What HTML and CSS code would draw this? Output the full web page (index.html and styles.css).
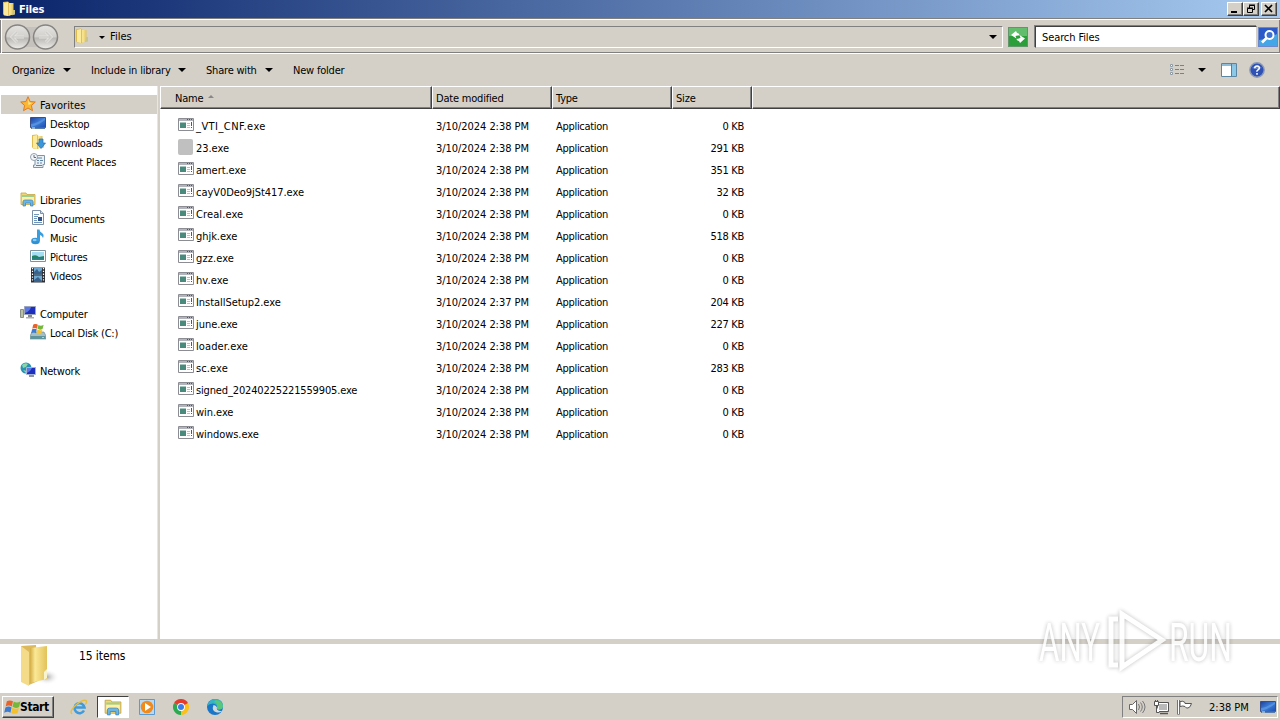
FILE: index.html
```html
<!DOCTYPE html>
<html lang="en">
<head>
<meta charset="utf-8">
<title>Files</title>
<link rel="stylesheet" href="styles.css">
</head>
<body>
<svg class="defs" aria-hidden="true">
  <defs>
    <linearGradient id="gold" x1="0" x2="1"><stop offset="0" stop-color="#d3ad45"/><stop offset=".3" stop-color="#fbe896"/><stop offset="1" stop-color="#e2c25a"/></linearGradient>
    <linearGradient id="blue" x1="0" y1="0" x2="1" y2="1"><stop offset="0" stop-color="#1c3f9e"/><stop offset=".5" stop-color="#3f7fd8"/><stop offset="1" stop-color="#1b4cb0"/></linearGradient>
    <linearGradient id="ball" x1="0" y1="0" x2="0" y2="1"><stop offset="0" stop-color="#e6e4e1"/><stop offset=".48" stop-color="#d3d1ce"/><stop offset=".55" stop-color="#bbb9b6"/><stop offset="1" stop-color="#efedea"/></linearGradient>
  </defs>
  <symbol id="folder" viewBox="0 0 16 16"><path d="M2 1l5-.5 1.500 1.500V15L3 14.500 2 13z" fill="#dcbb50"/><path d="M3 2l4-1v14l-4-1z" fill="#fbea9c"/><path d="M7 2h5.500v11.500L7 15z" fill="url(#gold)"/><path d="M12 9h2v4.500l-3 .8z" fill="#c9c48a"/></symbol>
  <symbol id="exe" viewBox="0 0 16 14"><path d="M.5.500h15v12H.5z" fill="#fff" stroke="#8c8c94"/><path d="M1 1h14v2H1z" fill="#b4b4bc"/><path d="M9 1.500h1m1 0h1m1 0h1" stroke="#555"/><path d="M2 4.500h6v5.500H2z" fill="#4a8a7c"/><path d="M9 5.500h3M9 7.500h3M9 9.500h3" stroke="#a9c8d4"/><path d="M13.500 4v4m0 1v1" stroke="#2f6678"/></symbol>
  <symbol id="lib" viewBox="0 0 16 16"><path d="M1 2h5l1 1.500h8v10H1z" fill="#f1d774" stroke="#c4a548" stroke-width=".8"/><path d="M2 4h12v2H2z" fill="#9fcf8f"/><path d="M2 6h12v5H2z" fill="#fff0a6"/><path d="M3 15V10.500Q3 9 5 9h6q2 0 2 1.500V15h-2.500v-3h-5v3z" fill="#6cb6e4" stroke="#3883ba" stroke-width=".7"/></symbol>
  <symbol id="screen" viewBox="0 0 16 16"><path d="M.5 2.500h15v10H.5z" fill="url(#blue)" stroke="#3a4e88"/><path d="M1 12V9q7-1 14-6v2Q9 10 1 12z" fill="#6ba7e8" opacity=".5"/><path d="M1 12.500h14V14H1z" fill="#5a7caa"/><path d="M2 12.500h3v1H2z" fill="#d8e8e0"/></symbol>
  <symbol id="flag4" viewBox="0 0 18 16"><path d="M3 2Q6 0 9.500 2L8.300 7.500Q5 5.500 1.800 7.500z" fill="#e8622a"/><path d="M10.300 2.300Q13.500 4.500 17.500 2L16 8q-3.500 2-7-.2z" fill="#75b73b"/><path d="M1.500 8.500Q5 6.500 8 8.500L6.800 14Q4 12 .2 14z" fill="#3c7bd2"/><path d="M8.800 8.800q3.500 2 7 .2L14.300 14.500q-3.500 1.500-6.700-.2z" fill="#f4c02c"/></symbol>
</svg>

<header class="titlebar">
  <svg class="i16"><use href="#folder"/></svg>
  <span class="title">Files</span>
  <div class="winbtns">
    <span class="wb"><svg width="12" height="11"><path d="M2 9h6" stroke="#000" stroke-width="2"/></svg></span>
    <span class="wb"><svg width="12" height="11"><path d="M4.500 5V2.500h5v4H8M4 2h6M2.500 5.500h5v4h-5zM2 5h6" fill="none" stroke="#000"/></svg></span>
    <span class="wb gap"><svg width="12" height="11"><path d="M2 2l7 7M9 2L2 9" stroke="#000" stroke-width="1.700"/></svg></span>
  </div>
</header>

<div class="navbar">
  <svg class="travel" width="56" height="28" viewBox="0 0 56 28">
    <rect x="10" y="4" width="34" height="20" fill="#c5c1bc"/>
    <g fill="url(#ball)" stroke="#858480" stroke-width="1.500"><circle cx="13.500" cy="14" r="12"/><circle cx="41.500" cy="14" r="12"/></g>
    <g fill="none" stroke="#e6e4e1" stroke-width="3"><path d="M20 14H8m5-5l-5 5 5 5"/><path d="M35 14h12m-5-5l5 5-5 5"/></g>
    <g fill="none" stroke="#cfcdca" stroke-width="1.500"><path d="M20 14H8m5-5l-5 5 5 5"/><path d="M35 14h12m-5-5l5 5-5 5"/></g>
  </svg>
  <div class="address">
    <svg class="i16"><use href="#folder"/></svg>
    <i class="tri small"></i><span>Files</span><i class="tri right"></i>
  </div>
  <svg class="refresh" width="20" height="20"><rect x=".5" y=".5" width="19" height="19" fill="#2a9f3a" stroke="#60966a"/><rect x="1" y="1" width="18" height="8" fill="#62bd6c"/><path d="M3 8l5-4 1 2q2 0 2.500 2L9 8.500 7.500 9l1 2.500zM17 11.500l-5 4.500-1-2q-2 0-2.500-2l2.500-.5 1.500-.8L11.500 8z" fill="#fff"/></svg>
  <div class="search">Search Files</div>
  <svg class="go" width="20" height="20"><rect x=".5" y=".5" width="19" height="19" fill="#2c59c8" stroke="#6d87c9"/><path d="M1 13q9-1 18-6v12H1z" fill="#43a6e6"/><circle cx="11.500" cy="8" r="4" fill="#3c70d2" stroke="#fff" stroke-width="2"/><path d="M8.500 11L4 15.500" stroke="#fff" stroke-width="2.600"/></svg>
</div>

<div class="toolbar">
  <span class="tb organize">Organize</span><i class="tri"></i>
  <span class="tb include">Include in library</span><i class="tri"></i>
  <span class="tb share">Share with</span><i class="tri"></i>
  <span class="tb newf">New folder</span>
  <div class="views">
    <svg width="16" height="14"><g fill="#fff" stroke="#8c9aa4"><path d="M1.500 1.500h2v2h-2zM1.500 5.500h2v2h-2zM1.500 9.500h2v2h-2z"/></g><path d="M6 2.500h4m1 0h4M6 6.500h4m1 0h4M6 10.500h4m1 0h4" stroke="#75828c"/></svg>
    <i class="tri"></i>
    <svg width="16" height="14"><path d="M.5.500h15v13H.5z" fill="#fff" stroke="#5a86a4"/><path d="M1 1h14v2H1z" fill="#8fbdd8"/><path d="M11 3h4v10h-4z" fill="#8cc8e8"/><path d="M10.500 1v12" stroke="#4b83a8"/></svg>
    <svg width="16" height="16"><circle cx="8" cy="8" r="7.200" fill="#2f50b4" stroke="#8f9bb5" stroke-width="1.400"/><path d="M3 6Q8 1 13 6q-5 2-10 0z" fill="#6484d0"/><path d="M5.700 6.200Q5.900 4 8.100 4t2.200 2q0 1.200-1.300 1.900T8 9.800M8 11v1.700" fill="none" stroke="#fff" stroke-width="1.600"/></svg>
  </div>
</div>

<main class="body">
  <nav class="tree">
    <div class="row top sel"><svg class="i16"><path d="M8 .7l2.100 4.800 5.200.5-3.900 3.500 1.100 5.200L8 12l-4.500 2.700 1.100-5.200L.7 6l5.200-.5z" fill="#fbb632" stroke="#e07b24"/><path d="M8 3l1.300 3.500 3 .5-3.800 2z" fill="#ffe995"/></svg><span class="w1">Favorites</span></div>
    <div class="row"><svg class="i16"><use href="#screen"/></svg><span>Desktop</span></div>
    <div class="row"><svg class="i16"><use href="#folder"/><path d="M9 5h4v4h2.500L11 14.500 6.500 9H9z" fill="#3b97dc" stroke="#2671b0" stroke-width=".7"/></svg><span>Downloads</span></div>
    <div class="row"><svg class="i16"><path d="M5 2.500h9.500v9H13v3H3.500V12H5z" fill="#e9f0f5" stroke="#7f95a6"/><path d="M7 5h5M7 7.500h2m1 0h3M7 10h2m1 0h2M6 12.500h6" stroke="#5e84a2"/><circle cx="4" cy="4" r="3.500" fill="#f5f8fa" stroke="#93a2ad"/><path d="M4 2v2.500h2" fill="none" stroke="#667"/></svg><span>Recent Places</span></div>
    <div class="row blank"></div>
    <div class="row top"><svg class="i16"><use href="#lib"/></svg><span>Libraries</span></div>
    <div class="row"><svg class="i16"><path d="M2.500.500h8l3 3v11h-11z" fill="#fafcff" stroke="#7b8fa5"/><path d="M10.500.500v3h3" fill="#d5dfe9" stroke="#7b8fa5"/><path d="M4 4.500h5M4 6.500h4M4 8.500h3M4 10.500h3M4 12.500h8" stroke="#6f95bd"/><path d="M8 7h4v4H8z" fill="#31538a"/></svg><span>Documents</span></div>
    <div class="row"><svg class="i16"><ellipse cx="5.500" cy="12" rx="4.300" ry="3.200" fill="#2e91d4"/><path d="M7 12V.5h2.500q0 2 2.500 3.500t1 5q-.8-2.500-3-3v6z" fill="#3b9ddb"/><ellipse cx="4.700" cy="11" rx="2" ry="1.200" fill="#8ccbef"/></svg><span>Music</span></div>
    <div class="row"><svg class="i16"><path d="M.5 2.500h15v11H.5z" fill="#fff" stroke="#7f929f"/><path d="M2 4h12v8H2z" fill="#a5ddf2"/><path d="M2 8q4-2 7 1l5-1v4H2z" fill="#23845f"/><path d="M2 10.500h12V12H2z" fill="#2e7fa8"/></svg><span>Pictures</span></div>
    <div class="row"><svg class="i16"><path d="M1 .5h14v15H1z" fill="#2d2f36"/><path d="M4 1h8v6.500H4zM4 8.500h8V15H4z" fill="#6fa9d2"/><path d="M4 5l3-3 2 3 3-2v4H4zM4 13l4-3 4 4v1H4z" fill="#39638d"/><path d="M2.500 1v14M13.500 1v14" stroke="#fff" stroke-width="1.200" stroke-dasharray="1.300 1.500"/></svg><span>Videos</span></div>
    <div class="row blank"></div>
    <div class="row top"><svg class="i16"><path d="M.5 4.500h3v8h-3z" fill="#b9c1a0" stroke="#8a8f85"/><path d="M4.500 1.500h11v8h-11z" fill="#1e2fbe" stroke="#9ba5be"/><path d="M5 2h6q-1 4-6 6z" fill="#5b77e4"/><path d="M8 10h4v2H8z" fill="#888"/><path d="M6 12h8v1.500H6z" fill="#aaaeb8"/></svg><span>Computer</span></div>
    <div class="row"><svg class="i16"><path d="M2 8h12l2 4v3H0v-3z" fill="#a5bfc4" stroke="#627f87" stroke-width=".6"/><path d="M.5 12h15v3H.5z" fill="#5f949d"/><path d="M12 13.500h2" stroke="#8f6"/><use href="#flag4" x="1" y="-1" width="13" height="12"/></svg><span>Local Disk (C:)</span></div>
    <div class="row blank"></div>
    <div class="row top"><svg class="i16"><circle cx="6" cy="6" r="5.500" fill="#2892b2"/><path d="M2 3q3-3 6-1L6 5 3 6zM3 8l4 1-1 2z" fill="#8ad6a5"/><path d="M6.500 5.500h9v7h-9z" fill="#1e2fbe" stroke="#a5b4d6"/><path d="M7 6h5q-1 3-5 5z" fill="#5b77e4"/><path d="M9 14h5" stroke="#8b93a5" stroke-width="2"/></svg><span>Network</span></div>
  </nav>
  <section class="list">
    <div class="head"><span class="c n">Name <i class="sort"></i></span><span class="c d">Date modified</span><span class="c t">Type</span><span class="c s">Size</span><span class="c rest"></span></div>
    <div class="files">
      <div class="file"><svg class="exe"><use href="#exe"/></svg><span class="fn w2">_VTI_CNF.exe</span><span class="fd">3/10/2024 2:38 PM</span><span class="ft">Application</span><span class="fs">0 KB</span></div>
      <div class="file"><i class="plain"></i><span class="fn">23.exe</span><span class="fd">3/10/2024 2:38 PM</span><span class="ft">Application</span><span class="fs">291 KB</span></div>
      <div class="file"><svg class="exe"><use href="#exe"/></svg><span class="fn">amert.exe</span><span class="fd">3/10/2024 2:38 PM</span><span class="ft">Application</span><span class="fs">351 KB</span></div>
      <div class="file"><svg class="exe"><use href="#exe"/></svg><span class="fn">cayV0Deo9jSt417.exe</span><span class="fd">3/10/2024 2:38 PM</span><span class="ft">Application</span><span class="fs">32 KB</span></div>
      <div class="file"><svg class="exe"><use href="#exe"/></svg><span class="fn w1">Creal.exe</span><span class="fd">3/10/2024 2:38 PM</span><span class="ft">Application</span><span class="fs">0 KB</span></div>
      <div class="file"><svg class="exe"><use href="#exe"/></svg><span class="fn">ghjk.exe</span><span class="fd">3/10/2024 2:38 PM</span><span class="ft">Application</span><span class="fs">518 KB</span></div>
      <div class="file"><svg class="exe"><use href="#exe"/></svg><span class="fn w1">gzz.exe</span><span class="fd">3/10/2024 2:38 PM</span><span class="ft">Application</span><span class="fs">0 KB</span></div>
      <div class="file"><svg class="exe"><use href="#exe"/></svg><span class="fn w1">hv.exe</span><span class="fd">3/10/2024 2:38 PM</span><span class="ft">Application</span><span class="fs">0 KB</span></div>
      <div class="file"><svg class="exe"><use href="#exe"/></svg><span class="fn">InstallSetup2.exe</span><span class="fd">3/10/2024 2:37 PM</span><span class="ft">Application</span><span class="fs">204 KB</span></div>
      <div class="file"><svg class="exe"><use href="#exe"/></svg><span class="fn">june.exe</span><span class="fd">3/10/2024 2:38 PM</span><span class="ft">Application</span><span class="fs">227 KB</span></div>
      <div class="file"><svg class="exe"><use href="#exe"/></svg><span class="fn w1">loader.exe</span><span class="fd">3/10/2024 2:38 PM</span><span class="ft">Application</span><span class="fs">0 KB</span></div>
      <div class="file"><svg class="exe"><use href="#exe"/></svg><span class="fn w1">sc.exe</span><span class="fd">3/10/2024 2:38 PM</span><span class="ft">Application</span><span class="fs">283 KB</span></div>
      <div class="file"><svg class="exe"><use href="#exe"/></svg><span class="fn long">signed_20240225221559905.exe</span><span class="fd">3/10/2024 2:38 PM</span><span class="ft">Application</span><span class="fs">0 KB</span></div>
      <div class="file"><svg class="exe"><use href="#exe"/></svg><span class="fn">win.exe</span><span class="fd">3/10/2024 2:38 PM</span><span class="ft">Application</span><span class="fs">0 KB</span></div>
      <div class="file"><svg class="exe"><use href="#exe"/></svg><span class="fn">windows.exe</span><span class="fd">3/10/2024 2:38 PM</span><span class="ft">Application</span><span class="fs">0 KB</span></div>
    </div>
  </section>
</main>

<footer class="details">
  <svg width="40" height="44" viewBox="0 0 40 44"><defs><radialGradient id="shade"><stop offset="0" stop-color="#aaa"/><stop offset="1" stop-color="#fff" stop-opacity="0"/></radialGradient></defs><ellipse cx="28" cy="33" rx="12" ry="8" fill="url(#shade)"/><path d="M2 2l15-1 2 36-9 4-8-4z" fill="#dcb95c"/><path d="M11 4l17-2v33l-17 4z" fill="url(#gold)"/><path d="M2 2l8 6v34l-8-4z" fill="#f3db8a"/><path d="M25 28l3-3v9l-3 2z" fill="#f7f3cf"/></svg>
  <span class="count">15 items</span>
</footer>

<div class="taskbar">
  <div class="start"><svg width="17" height="16"><use href="#flag4"/></svg><b>Start</b></div>
  <div class="task"><svg width="18" height="18" viewBox="0 0 18 18"><path d="M14 12.500A5 5 0 1 1 14.500 9.500H5" fill="none" stroke="#3f9bdc" stroke-width="2.500"/><path d="M2 16Q-1 13 6 7T16 2.500q1.500 2-1 4" fill="none" stroke="#e5bf45" stroke-width="1.500"/></svg></div>
  <div class="task active"><svg width="18" height="18"><use href="#lib"/></svg></div>
  <div class="task"><svg width="16" height="16"><path d="M.5.500h15v15H.5z" fill="#b9d9f2" stroke="#5b9bcf"/><circle cx="8" cy="8" r="6.300" fill="#f08a1d"/><path d="M6 4l6 4-6 4z" fill="#fff"/></svg></div>
  <div class="task"><svg width="16" height="16" viewBox="0 0 16 16"><path d="M8 8V0L14.930 4A8 8 0 0 1 8 16z" fill="#fbc116"/><path d="M8 8L8 16A8 8 0 0 1 1.070 4z" fill="#2da94f"/><path d="M1.070 4A8 8 0 0 1 14.930 4L8 8z" fill="#e33b2e"/><circle cx="8" cy="8" r="3.900" fill="#fff"/><circle cx="8" cy="8" r="3" fill="#3b7de9"/></svg></div>
  <div class="task"><svg width="16" height="16" viewBox="0 0 16 16"><circle cx="8" cy="8" r="8" fill="#1a76c9"/><path d="M.3 7Q2 0 8 0q8 0 8 7 0 3.500-4 3.500-3 0-2-2Q10 5 6 4.500 2 4.500.3 7z" fill="#35b5c0"/><path d="M9 1q6 1 7 6-.3 3.400-4 3.400-2 0-2-1.400Q11 4 7 3z" fill="#58c77a"/><path d="M6.500 6q-2.500 6 3.500 7.500 3 .5 5-1.500h-2q-4-1-3-3.500Q9 6 6.500 6z" fill="#d4d9d8"/></svg></div>
  <div class="tray">
    <svg class="vol" width="18" height="16"><path d="M1.500 5.500h3l4-4v13l-4-4h-3z" fill="#fff" stroke="#666"/><path d="M10.500 5q2 3 0 6M12.500 3.500q3.500 4.500 0 9M14.500 2q5 6 0 12" fill="none" stroke="#777"/></svg>
    <svg class="net" width="17" height="16"><path d="M4.500 3.500h11v9h-11z" fill="#b9b9b9" stroke="#555"/><path d="M5.500 4.500h9v7h-9z" fill="none" stroke="#fff"/><path d="M7 14.500h8" stroke="#555" stroke-width="1.500"/><path d="M1.500 2.500h4v4h-4zM2.500 1v1M4.500 1v1M3.500 7v6.500h3" fill="#fff" stroke="#555"/></svg>
    <svg class="flg" width="18" height="16"><path d="M2.500 1v14.500" stroke="#555" stroke-width="2.500"/><path d="M2.500 1v14" stroke="#fff"/><path d="M4 2.500q3-1 5 1v1h6.500q-1 4-3.500 4.500-2 .5-3-1.500-2-1-5 0z" fill="#fff" stroke="#555"/></svg>
    <span class="clock">2:38 PM</span>
    <svg class="i16"><use href="#screen"/></svg>
  </div>
</div>

<svg class="mark" width="220" height="76" viewBox="0 0 220 76">
  <g fill="#fff"><text x="9" y="59" textLength="61" lengthAdjust="spacingAndGlyphs">ANY</text><text x="139" y="59" textLength="63" lengthAdjust="spacingAndGlyphs">RUN</text></g>
  <g fill="none" stroke="#fff" stroke-width="5"><path d="M88 17h-7v46h7M92 12l40 26-40 27z"/></g>
</svg>
</body>
</html>
```
FILE: styles.css
```css
* { box-sizing: border-box; }
body { margin: 0; width: 1280px; height: 720px; overflow: hidden; background: #d4d0c8; color: #000; font: 11px/14px "DejaVu Sans Condensed", "DejaVu Sans", sans-serif; font-stretch: condensed; letter-spacing: -.2px; display: flex; flex-direction: column; white-space: nowrap; }
svg { display: block; flex: none; }
.defs { width: 0; height: 0; position: absolute; }
.i16 { width: 16px; height: 16px; }
.tri { border: 4px solid transparent; border-top-color: #000; border-bottom: 0; width: 8px; height: 4px; flex: none; }
.tri.small { border-width: 3px; border-bottom: 0; width: 6px; height: 3px; }

.titlebar { height: 18px; flex: none; display: flex; align-items: center; padding: 0 3px 0 1px; background: linear-gradient(90deg, #0a246a, #a6caf0); color: #fff; }
.title { font-weight: bold; margin-left: 2px; padding-top: 1px; }
.winbtns { display: flex; margin-left: auto; }
.wb { width: 16px; height: 14px; background: #d4d0c8; border: 1px solid; border-color: #fff #404040 #404040 #fff; box-shadow: inset -1px -1px #808080; padding-left: 1px; }
.wb.gap { margin-left: 2px; }

.navbar { height: 36px; flex: none; display: flex; align-items: center; padding: 2px 2px 0 4px; border-top: 1px solid #808080; border-bottom: 1px solid #fff; box-shadow: inset 0 1px #fff, inset 1px 0 #808080, inset 2px 0 #fff, inset -1px 0 #808080, inset 0 -1px #808080; }
.address { width: 929px; height: 22px; margin-left: 14px; border: 1px solid; border-color: #808080 #fff #fff #808080; display: flex; align-items: center; letter-spacing: 0; }
.address .i16 { margin: 0 0 2px -1px; }
.address span { margin-left: 5px; }
.address .small { margin-left: 9px; }
.address .right { margin-left: auto; margin-right: 5px; }
.refresh { margin-left: 5px; }
.search { width: 222px; height: 22px; margin: 0 1px 0 7px; padding: 4px 6px; background: #fff; border: 1px solid; border-color: #404040 #d4d0c8 #d4d0c8 #404040; box-shadow: -1px -1px #808080; letter-spacing: -.1px; }

.toolbar { height: 32px; flex: none; display: flex; align-items: center; padding: 0 15px 0 12px; }
.tb { flex: none; padding-top: 1px; }
.organize { width: 51px; }
.include { width: 87px; margin-left: 20px; }
.share { width: 59px; margin-left: 20px; }
.newf { margin-left: 20px; }
.views { display: flex; align-items: center; margin-left: auto; }
.views .tri { margin: 0 15px 0 13px; }
.views svg:last-child { margin-left: 12px; }

.body { height: 553px; flex: none; display: flex; background: #fff; }
.tree { width: 158px; padding: 9px 0 0 1px; border-right: 1px solid #e8e6e2; }
.row { height: 19px; display: flex; align-items: center; padding-left: 29px; }
.row svg { margin-bottom: 1px; }
.row span { margin-left: 4px; padding-top: 2px; }
.row.top { padding-left: 19px; }
.row.sel { background: #d4d0c8; }
.w1 { letter-spacing: .1px; }
.w2 { letter-spacing: .45px; }
.list { flex: 1; border-left: 2px solid #d4d0c8; }
.head { height: 23px; display: flex; background: #d4d0c8; }
.c { padding: 5px 0 0 4px; border: 1px solid; border-color: #fff #404040 #404040 #fff; box-shadow: inset -1px -1px #808080; }
.n { width: 272px; padding-left: 14px; }
.d, .t, .s { padding-left: 3px; }
.d, .t { width: 120px; }
.s { width: 80px; }
.rest { flex: 1; }
.sort { display: inline-block; margin: 0 0 4px 2px; border: 3px solid transparent; border-bottom-color: #888; border-top: 0; }
.files { padding: 6px 0 0 18px; }
.file { height: 22px; display: flex; align-items: center; }
.file span { padding-top: 1px; }
.exe { width: 16px; height: 14px; margin-bottom: 2px; }
.plain { width: 15px; height: 16px; margin: 0 1px 2px 0; border-radius: 2px; background: #c0c0c0; }
.file .fn { width: 242px; padding-left: 2px; }
.fn:not(.w1):not(.w2) { letter-spacing: -.05px; }
.fn.long:not(.w1) { letter-spacing: -.15px; }
.fd { width: 120px; letter-spacing: -.05px; }
.ft { width: 119px; letter-spacing: -.3px; }
.fs { width: 69px; text-align: right; letter-spacing: -.3px; }

.details { height: 53px; flex: none; display: flex; align-items: flex-start; background: #fff; border-top: 5px solid #d4d0c8; padding-left: 19px; }
.count { margin: 5px 0 0 20px; font-size: 12px; letter-spacing: -.1px; }

.taskbar { flex: 1; display: flex; align-items: center; background: #d4d0c8; box-shadow: inset 0 1px #fff; padding: 2px 2px 0; }
.start { width: 52px; height: 22px; display: flex; align-items: center; padding-left: 1px; background: #d4d0c8; border: 1px solid; border-color: #fff #404040 #404040 #fff; box-shadow: inset -1px -1px #808080; margin-right: 8px; }
.start b { font-size: 12px; letter-spacing: -.4px; margin-left: -1px; }
.task { width: 34px; height: 22px; display: flex; align-items: center; justify-content: center; }
.task.active { width: 32px; margin: 0 1px; background: #fff; border: 1px solid; border-color: #404040 #fff #fff #404040; }
.tray { width: 156px; height: 22px; margin-left: auto; display: flex; align-items: center; border: 1px solid; border-color: #808080 #fff #fff #808080; padding-left: 5px; }
.net { margin-left: 7px; }
.flg { margin-left: 6px; }
.clock { margin-left: 15px; width: 51px; padding-top: 1px; letter-spacing: 0; }

.mark { position: absolute; left: 1030px; top: 602px; opacity: .85; filter: drop-shadow(0 0 2px rgba(0,0,0,.3)); }
.mark text { font: 53px/1 "Roboto", "Liberation Sans", sans-serif; letter-spacing: 0; }
```
